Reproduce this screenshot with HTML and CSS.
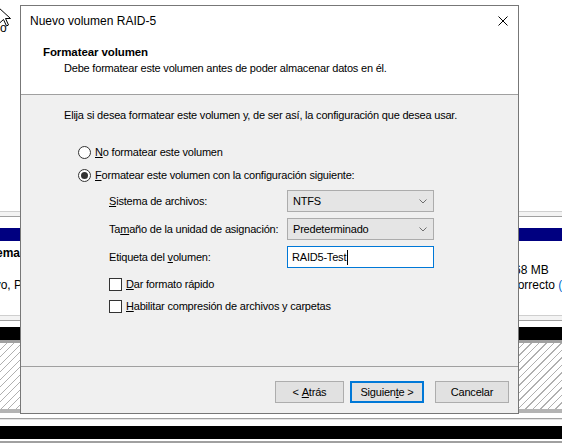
FILE: index.html
```html
<!DOCTYPE html>
<html lang="es">
<head>
<meta charset="utf-8">
<title>Nuevo volumen RAID-5</title>
<link rel="stylesheet" href="styles.css">
</head>
<body>
<div class="screen">
  <div class="desk">
    <div class="desk-top"><span class="frag">o</span></div>
    <div class="rules"></div>
    <div class="sp11"></div>
    <div class="navy"></div>
    <div class="disk-row">
      <div class="disk-left">
        <span class="bold">Sistema</span>
        <span class="left2">Nuevo, P</span>
      </div>
      <div class="disk-right">
        <span>68 MB</span>
        <span class="shift">Correcto <span class="blue">(</span></span>
      </div>
    </div>
    <div class="rules"></div>
    <div class="sp6"></div>
    <div class="black"></div>
    <div class="band3"></div>
    <div class="hatch"></div>
    <div class="band4"></div>
    <div class="sp5"></div>
    <div class="line1"></div>
    <div class="line1b"></div>
    <div class="sp6"></div>
    <div class="black"></div>
    <div class="sp2"></div>
    <div class="band2"></div>
  </div>

  <div class="dialog">
    <div class="head">
      <div class="titlebar">
        <span class="title">Nuevo volumen RAID-5</span>
        <svg class="close" width="10" height="10" viewBox="0 0 10 10"><path d="M0.5 0.5L9.5 9.5M9.5 0.5L0.5 9.5" stroke="#000" stroke-width="1" fill="none"/></svg>
      </div>
      <div class="head-text">
        <div class="h-title">Formatear volumen</div>
        <div class="h-sub">Debe formatear este volumen antes de poder almacenar datos en él.</div>
      </div>
    </div>
    <div class="content">
      <p class="intro">Elija si desea formatear este volumen y, de ser así, la configuración que desea usar.</p>
      <div class="options">
        <div class="row"><span class="rb"></span><span><u>N</u>o formatear este volumen</span></div>
        <div class="row"><span class="rb on"></span><span><u>F</u>ormatear este volumen con la configuración siguiente:</span></div>
      </div>
      <div class="form">
        <span class="lbl"><u>S</u>istema de archivos:</span>
        <div class="combo"><span>NTFS</span><svg width="8" height="5" viewBox="0 0 8 5"><path d="M0.5 0.5L4 4L7.5 0.5" stroke="#6e6e6e" fill="none"/></svg></div>
        <span class="lbl">Ta<u>m</u>año de la unidad de asignación:</span>
        <div class="combo"><span>Predeterminado</span><svg width="8" height="5" viewBox="0 0 8 5"><path d="M0.5 0.5L4 4L7.5 0.5" stroke="#6e6e6e" fill="none"/></svg></div>
        <span class="lbl">Etiqueta del <u>v</u>olumen:</span>
        <div class="input"><span>RAID5-Test</span><span class="caret"></span></div>
      </div>
      <div class="checks">
        <div class="row"><span class="cb"></span><span><u>D</u>ar formato rápido</span></div>
        <div class="row"><span class="cb"></span><span><u>H</u>abilitar compresión de archivos y carpetas</span></div>
      </div>
    </div>
    <div class="footer">
      <div class="btn b-back"><span>&lt;&nbsp;<u>A</u>trás</span></div>
      <div class="btn b-next"><span>Siguien<u>t</u>e&nbsp;&gt;</span></div>
      <div class="btn b-cancel"><span>Cancelar</span></div>
    </div>
  </div>

  <svg class="cursor" width="14" height="30" viewBox="0 0 14 30"><path d="M-1.5 7.5L10.5 18.5L5.5 18.5L8.5 25L6.5 26L3.5 19.5L-1.5 24Z" fill="#fff" stroke="#000" stroke-width="1"/></svg>
</div>
</body>
</html>
```

FILE: styles.css
```css
* { box-sizing: border-box; }
html, body { margin: 0; padding: 0; }
body {
  width: 562px;
  height: 444px;
  overflow: hidden;
  background: #fff;
  font-family: "Liberation Sans", Arial, sans-serif;
  color: #000;
}
.screen { position: relative; width: 562px; height: 444px; overflow: hidden; }

/* background window */
.desk { display: flex; flex-direction: column; width: 100%; height: 100%; }
.desk > div { flex: none; }
.desk-top { height: 211px; font-size: 12px; line-height: 15px; padding-top: 21px; }
.rules { height: 6px; border-top: 1px solid #cfcfcf; border-bottom: 1px solid #a0a0a0; background: #f3f3f3; }
.sp11 { height: 11px; }
.sp6 { height: 6px; }
.sp5 { height: 5px; }
.sp2 { height: 2px; }
.navy { height: 13px; background: #000080; }
.black { height: 13px; background: #000; }
.band3 { height: 3px; background: #a0a0a0; }
.band4 { height: 4px; background: #b4b4b4; }
.band2 { height: 3px; background: #a0a0a0; border-bottom: 1px solid #fff; }
.line1 { height: 1px; background: #a0a0a0; }
.line1b { height: 1px; background: #e3e3e3; }
.hatch {
  height: 66px;
  background: repeating-linear-gradient(135deg, #fff 0 4.3px, #b0b0b0 4.3px 5.3px);
}
.disk-row { height: 74px; display: flex; font-size: 12px; line-height: 15px; }
.disk-left {
  width: 22px;
  overflow: hidden;
  display: flex;
  flex-direction: column;
  align-items: flex-end;
  padding-top: 5px;
  gap: 17px;
  white-space: nowrap;
}
.disk-left .bold { font-weight: bold; margin-right: 2px; }
.disk-right {
  margin-left: auto;
  width: 48px;
  display: flex;
  flex-direction: column;
  padding-top: 22px;
  white-space: nowrap;
}
.disk-right .shift { margin-left: -5px; }
.blue { color: #0066cc; }

/* dialog */
.dialog {
  position: absolute;
  left: 20px;
  top: 5px;
  width: 499px;
  height: 409px;
  border: 1px solid #777;
  background: #f0f0f0;
  display: flex;
  flex-direction: column;
  font-size: 11px;
  letter-spacing: -0.2px;
}
.head { flex: none; height: 89px; background: #fff; border-bottom: 1px solid #a0a0a0; }
.titlebar {
  height: 29px;
  display: flex;
  align-items: center;
  justify-content: space-between;
  padding: 0 10px 0 9px;
  font-size: 12px;
  letter-spacing: 0;
}
.close { display: block; }
.head-text { padding: 10px 0 0 22px; line-height: 14px; }
.h-title { font-weight: bold; font-size: 11.5px; letter-spacing: -0.1px; }
.h-sub { margin-top: 2px; padding-left: 21px; }

.content { flex: 1; padding: 13px 0 0 43px; line-height: 14px; }
.intro { margin: 0; }
.options { margin: 22px 0 0 14px; display: flex; flex-direction: column; gap: 7px; }
.row { height: 16px; display: flex; align-items: center; gap: 4px; white-space: nowrap; }
.rb {
  width: 13px; height: 13px; border-radius: 50%;
  border: 1px solid #333; background: #fff;
  display: flex; align-items: center; justify-content: center; flex: none;
}
.rb.on::after { content: ""; width: 7px; height: 7px; border-radius: 50%; background: #333; }
.cb { width: 13px; height: 13px; border: 1px solid #333; background: #fff; flex: none; }

.form {
  margin: 7px 0 0 45px;
  display: grid;
  grid-template-columns: 178px 147px;
  grid-auto-rows: 22px;
  row-gap: 6px;
  align-items: center;
}
.combo {
  height: 22px;
  border: 1px solid #acacac;
  background: #e5e5e5;
  display: flex;
  align-items: center;
  justify-content: space-between;
  padding: 0 6px 0 5px;
}
.combo svg { display: block; }
.input {
  height: 22px;
  border: 1px solid #0078d7;
  background: #fff;
  display: flex;
  align-items: center;
  padding-left: 4px;
}
.caret { width: 1px; height: 15px; background: #000; margin-left: 1px; }

.checks { margin: 8px 0 0 45px; display: flex; flex-direction: column; gap: 6px; }
.checks .row { gap: 4px; }

.footer {
  flex: none;
  height: 47px;
  border-top: 1px solid #a0a0a0;
  padding: 14px 9px 10px 0;
  display: flex;
  justify-content: flex-end;
}
.btn {
  height: 22px;
  border: 1px solid #adadad;
  background: #e1e1e1;
  display: flex;
  align-items: center;
  justify-content: center;
  white-space: nowrap;
}
.b-back { width: 69px; margin-right: 6px; }
.b-next { width: 74px; margin-right: 11px; border: 2px solid #0078d7; }
.b-cancel { width: 74px; }

.cursor { position: absolute; left: 0; top: 0; }
```
